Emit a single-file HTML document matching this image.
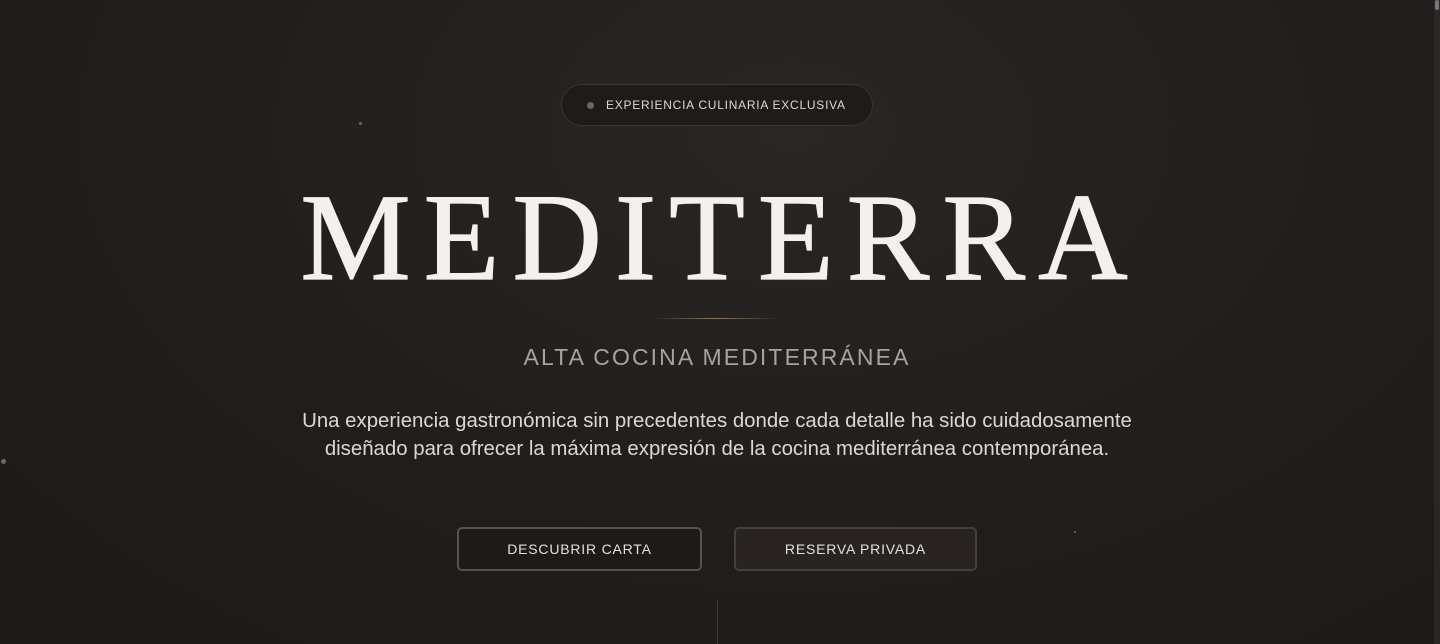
<!DOCTYPE html>
<html><head><style>
html,body{margin:0;padding:0}
body{width:1440px;height:644px;overflow:hidden;position:relative;background:radial-gradient(ellipse at 55% 20%,#2a2624 0%,#221e1d 50%,#1c1918 100%);font-family:"Liberation Sans",sans-serif;color:#eee}
.sb{position:absolute;right:0;top:0;width:6px;height:644px;background:#2a2727}
.sb:after{content:"";position:absolute;left:1px;top:0;width:4px;height:10px;background:#777;border-radius:2px}
.pill{position:absolute;left:561px;top:84px;width:312px;height:42px;border:1px solid #3a3532;border-radius:21px;background:#1f1b1a;box-sizing:border-box}
.pill .d{position:absolute;left:25px;top:17px;width:7px;height:7px;border-radius:50%;background:#6b6765}
.pill span{position:absolute;left:44px;top:13px;font-size:12px;letter-spacing:0.75px;color:#ddd9d4}
h1{position:absolute;left:-3px;width:1434px;top:153px;margin:0;text-align:center;font-family:"Liberation Serif",serif;font-weight:normal;font-size:124px;line-height:170px;letter-spacing:13px;text-indent:13px;color:#f3f1ec;-webkit-text-stroke:1.2px #f3f1ec}
.ln{position:absolute;left:652px;top:318px;width:128px;height:1px;background:linear-gradient(90deg,transparent,#8a7a68,transparent)}
.sub{position:absolute;left:0;width:1434px;top:344px;text-align:center;font-size:23px;letter-spacing:2.1px;color:#a9a39d}
.p{position:absolute;left:0;width:1434px;top:407px;text-align:center;font-size:20.4px;line-height:28px;color:#dcd8d3}
.b{position:absolute;top:527px;height:44px;box-sizing:border-box;border:2px solid #57514c;border-radius:5px;text-align:center;line-height:40px;font-size:14px;letter-spacing:0.8px;color:#e3dfda}
.vl{position:absolute;left:717px;top:600px;width:1px;height:44px;background:#3e3a37}
.dot{position:absolute;border-radius:50%;background:#6b6765}
</style></head><body>
<div class="pill"><div class="d"></div><span>EXPERIENCIA CULINARIA EXCLUSIVA</span></div>
<h1>MEDITERRA</h1>
<div class="ln"></div>
<div class="sub">ALTA COCINA MEDITERRÁNEA</div>
<div class="p">Una experiencia gastronómica sin precedentes donde cada detalle ha sido cuidadosamente<br>diseñado para ofrecer la máxima expresión de la cocina mediterránea contemporánea.</div>
<div class="b" style="left:457px;width:245px;background:#1e1a19">DESCUBRIR CARTA</div>
<div class="b" style="left:734px;width:243px;background:#292423;border-color:#45403c">RESERVA PRIVADA</div>
<div class="vl"></div>
<div class="dot" style="left:359px;top:122px;width:3px;height:3px"></div>
<div class="dot" style="left:1px;top:459px;width:5px;height:5px"></div>
<div class="dot" style="left:1074px;top:531px;width:2px;height:2px"></div>
<div class="sb"></div>
</body></html>
